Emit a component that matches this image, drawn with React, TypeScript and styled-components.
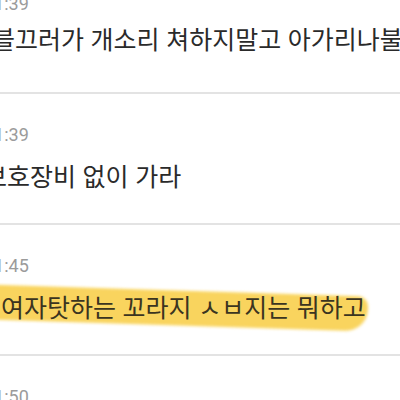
import styled, { createGlobalStyle } from "styled-components";

const GlobalStyle = createGlobalStyle`
  html, body {
    margin: 0;
    padding: 0;
    background: #fff;
    overflow: hidden;
  }
  body {
    font-family: "Noto Sans CJK KR", "Noto Sans", sans-serif;
  }
`;

const Feed = styled.div`
  width: 400px;
  height: 400px;
  overflow: hidden;
`;

const List = styled.div`
  display: flex;
  flex-direction: column;
  margin-top: -37px;
`;

const Comment = styled.div`
  flex: none;
  box-sizing: border-box;
  height: 131px;
  padding-top: 32px;
  border-bottom: 2px solid #e3e3e3;
  display: flex;
  flex-direction: column;
  overflow: hidden;
  white-space: nowrap;
`;

const Time = styled.div`
  font-family: Roboto, "Noto Sans", sans-serif;
  font-size: 18px;
  line-height: 18px;
  color: #9b9b9b;
  margin-left: -16px;
`;

const Body = styled.div<{ $shift: number; $lift?: boolean }>`
  margin-top: ${(p) => (p.$lift ? 13 : 19)}px;
  margin-left: ${(p) => p.$shift}px;
  font-size: 25px;
  line-height: 25px;
  letter-spacing: 0;
  word-spacing: 1px;
  color: #2a2a2a;
`;

const Marked = styled.span`
  position: relative;
  isolation: isolate;
  color: #3b3420;

  &::before {
    content: "";
    position: absolute;
    left: -30px;
    right: -2px;
    top: -4px;
    height: 35px;
    background: #f9d45e;
    border-radius: 0 10px 22px 0;
    transform: rotate(1.8deg);
    transform-origin: left center;
    filter: blur(1.5px);
    z-index: -1;
  }
`;

const comments = [
  { time: "11:39", text: "블끄러가 개소리 쳐하지말고 아가리나불거리지마라", shift: -8, lift: true },
  { time: "11:39", text: "보호장비 없이 가라", shift: -16 },
  { time: "11:45", text: "여자탓하는 꼬라지 ㅅㅂ지는 뭐하고", shift: 1, marked: true },
  { time: "11:50", text: "", shift: 0 },
];

export default function App() {
  return (
    <Feed>
      <GlobalStyle />
      <List>
        {comments.map((c, i) => (
          <Comment key={i}>
            <Time>{c.time}</Time>
            <Body $shift={c.shift} $lift={c.lift}>
              {c.marked ? <Marked>{c.text}</Marked> : c.text}
            </Body>
          </Comment>
        ))}
      </List>
    </Feed>
  );
}
